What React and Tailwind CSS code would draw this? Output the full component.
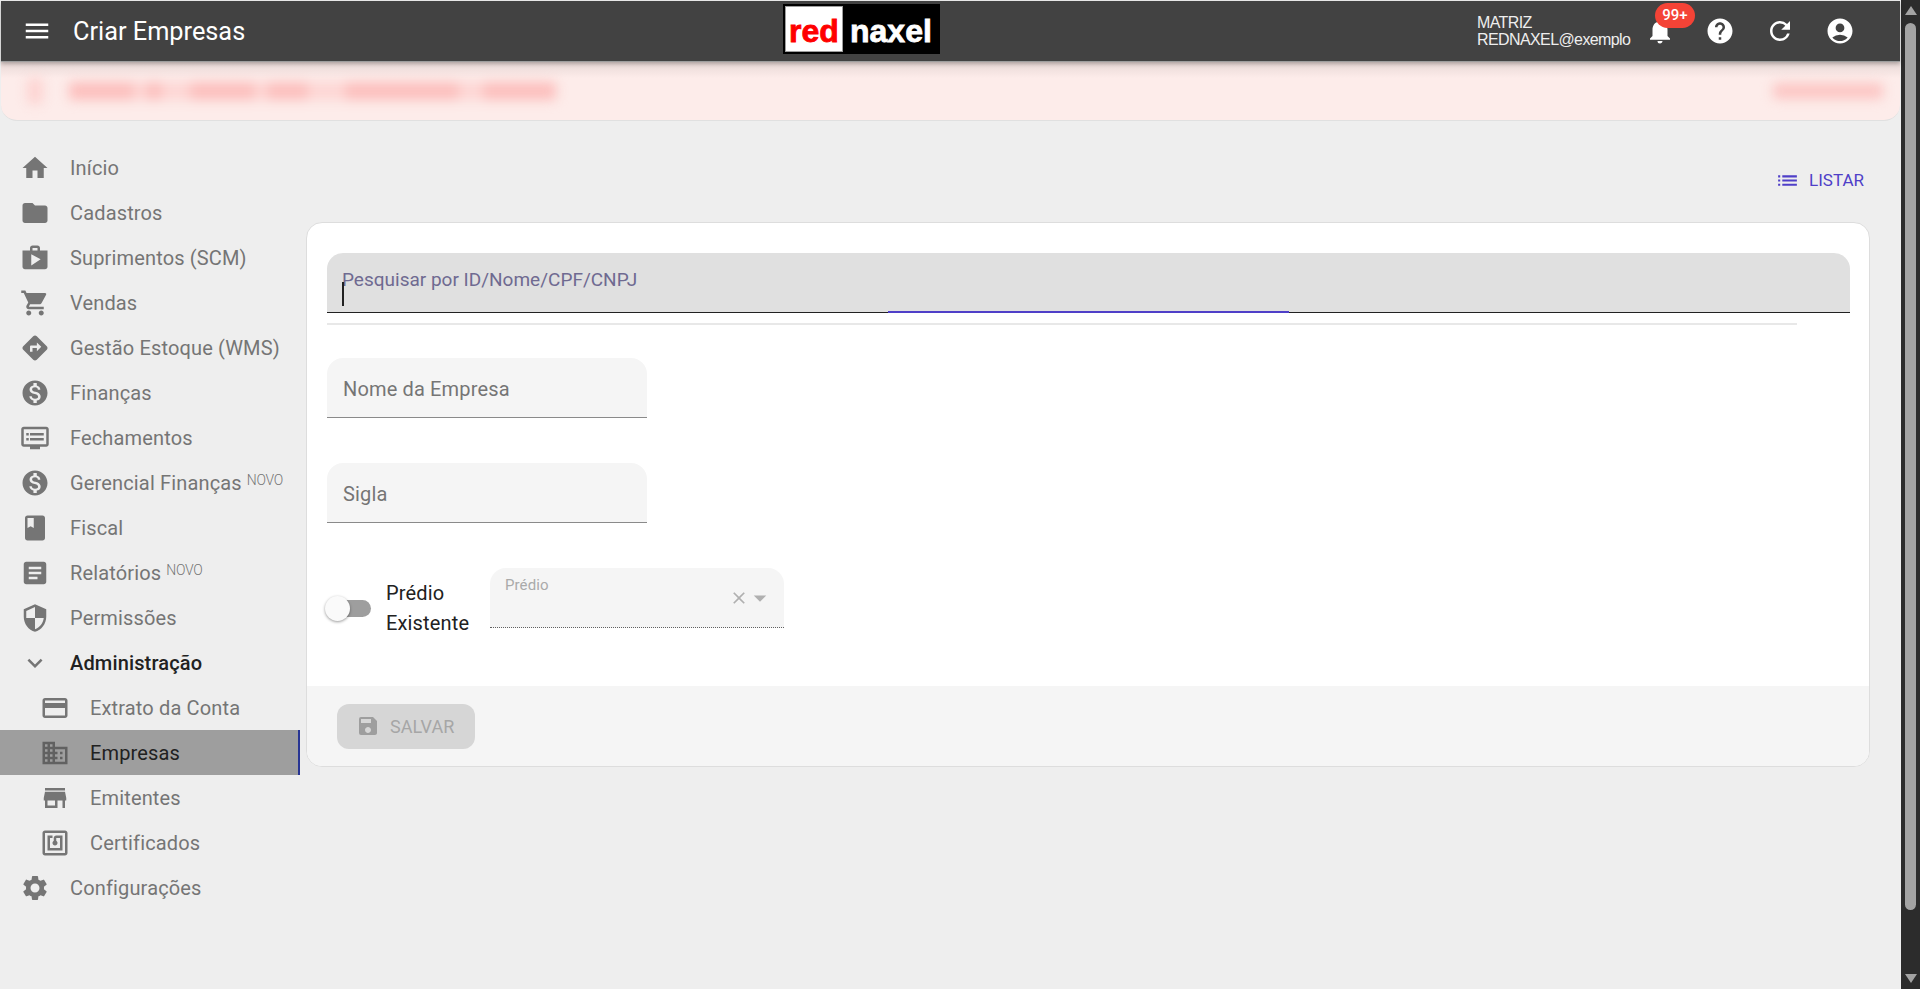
import React from "react";
import {
  MdMenu, MdNotifications, MdHelp, MdRefresh, MdAccountCircle, MdHome, MdFolder, MdShop, MdShoppingCart,
  MdDirections, MdMonetizationOn, MdDvr, MdBook, MdArticle, MdSecurity, MdExpandMore,
  MdOutlineCreditCard, MdDomain, MdStore, MdNfc, MdSettings, MdList, MdSave, MdClose, MdArrowDropDown,
} from "react-icons/md";

const items = [
  { t: "Início", I: MdHome },
  { t: "Cadastros", I: MdFolder },
  { t: "Suprimentos (SCM)", I: MdShop },
  { t: "Vendas", I: MdShoppingCart },
  { t: "Gestão Estoque (WMS)", I: MdDirections },
  { t: "Finanças", I: MdMonetizationOn },
  { t: "Fechamentos", I: MdDvr },
  { t: "Gerencial Finanças", I: MdMonetizationOn, novo: true },
  { t: "Fiscal", I: MdBook },
  { t: "Relatórios", I: MdArticle, novo: true },
  { t: "Permissões", I: MdSecurity },
  { t: "Administração", I: MdExpandMore, open: true },
  { t: "Extrato da Conta", I: MdOutlineCreditCard, sub: true },
  { t: "Empresas", I: MdDomain, sub: true, active: true },
  { t: "Emitentes", I: MdStore, sub: true },
  { t: "Certificados", I: MdNfc, sub: true },
  { t: "Configurações", I: MdSettings },
];

const blurSegments = [
  "ml-0 w-[65px]",
  "ml-[12px] w-[16px]",
  "ml-[28px] w-[65px]",
  "ml-[12px] w-[41px]",
  "ml-[37px] w-[114px]",
  "ml-[24px] w-[73px]",
];

function NavItem({ t, I, novo, open, sub, active }) {
  const tone = active ? "border-r-2 border-[#283593] bg-[#9e9e9e] text-[#212121] " : open ? "font-medium text-[#212121] " : "text-[#757575] ";
  return (
    <div className={"flex h-[45px] items-center text-[20px] leading-none tracking-[0.15px] " + (sub ? "pl-[40px] " : "pl-[20px] ") + tone}>
      <I className={"h-[30px] w-[30px] shrink-0 " + (active ? "text-[#616161]" : "text-[#757575]")} />
      <span className="ml-[20px] whitespace-nowrap">{t}</span>
      {novo && <sup className="top-0 ml-[5px] mt-[-5px] self-center text-[14px] font-light leading-none tracking-[-0.3px]">NOVO</sup>}
    </div>
  );
}

function Field({ label }) {
  return (
    <div className="flex h-[60px] w-[320px] items-center rounded-t-[16px] border-b border-[#8a8a8a] bg-[#f5f5f5] px-[16px] pt-[2px] text-[20px] tracking-[0.15px] text-[#757575]">
      {label}
    </div>
  );
}

export default function App() {
  return (
    <div className="flex h-[989px] w-[1920px] overflow-hidden bg-[#eeeeee] font-['Roboto',sans-serif]">
      <div className="flex w-[1901px] shrink-0 flex-col">
        <header className="z-10 mx-[1px] mt-[1px] flex h-[61px] shrink-0 items-center border-b border-[#9e9e9e] bg-[#424242] text-white shadow-[0_2px_4px_rgba(0,0,0,0.25)]">
          <MdMenu className="ml-[21px] h-[30px] w-[30px]" />
          <span className="ml-[21px] w-[710px] pt-[2px] text-[25.3px] leading-none">Criar Empresas</span>
          <div className="mt-[-4px] flex h-[50px] w-[157px] items-center border-[2px] border-black bg-black font-['Liberation_Sans',sans-serif] text-[32px] font-bold leading-none [-webkit-text-stroke:0.8px]">
            <span className="flex h-[46px] w-[58px] items-center justify-center border border-[#9e9e9e] bg-white pt-[4px] text-[#ff0000]">red</span>
            <span className="ml-[7px] pt-[4px] text-white">naxel</span>
          </div>
          <div className="ml-[537px] flex w-[160px] flex-col font-['Liberation_Sans',sans-serif] text-[16px] leading-[17px] tracking-[-0.6px] text-[#eeeeee]">
            <span>MATRIZ</span>
            <span className="whitespace-nowrap">REDNAXEL@exemplo</span>
          </div>
          <div className="relative ml-[8px] h-[30px] w-[30px]">
            <MdNotifications className="h-[30px] w-[30px]" />
            <span className="absolute left-[10px] top-[-13px] flex h-[25px] w-[40px] items-center justify-center rounded-full bg-[#f44336] text-[15px] font-medium text-white">99+</span>
          </div>
          <MdHelp className="ml-[30px] h-[30px] w-[30px]" />
          <MdRefresh className="ml-[30px] h-[30px] w-[30px]" />
          <MdAccountCircle className="ml-[30px] h-[30px] w-[30px]" />
        </header>

        <div className="relative mx-[1px] flex h-[59px] shrink-0 items-center justify-between overflow-hidden rounded-b-[16px] border-b border-[#e0e0e0] bg-[#fdecea]">
          <div className="absolute inset-x-0 top-0 h-[16px] bg-gradient-to-b from-[#e8d8d6] to-[#fdecea]" />
          <div className="relative ml-[26px] flex items-center">
            <span className="h-[26px] w-[16px] rounded-sm bg-[#fdd4d2] blur-[6px]" />
            <div className="ml-[26px] flex items-center bg-[#fdd6d4] blur-[6px]">
              {blurSegments.map((c) => (
                <span key={c} className={"h-[18px] rounded-sm bg-[#fcbfbd] " + c} />
              ))}
            </div>
          </div>
          <span className="relative mr-[17px] h-[16px] w-[110px] rounded-sm bg-[#fcc6c4] blur-[6px]" />
        </div>

        <div className="flex flex-1">
          <nav className="mt-[24px] w-[300px] shrink-0">
            {items.map((it) => (
              <NavItem key={it.t} {...it} />
            ))}
          </nav>
          <main className="ml-[6px] w-[1564px]">
            <div className="mt-[39px] flex h-[40px] items-center justify-end pr-[6px] pt-[1px] text-[17px] text-[#4f3fc8]">
              <MdList className="h-[25px] w-[25px]" />
              <span className="ml-[9px]">LISTAR</span>
            </div>
            <section className="mt-[22px] overflow-hidden rounded-[16px] border border-[#dddddd] bg-white">
              <div className="px-[20px] pt-[30px]">
                <div className="relative h-[60px] w-[1523px] rounded-t-[16px] border-b border-[#212121] bg-[#e0e0e0]">
                  <span className="absolute left-[15px] top-[15px] text-[19px] leading-[24px] text-[#6f6a91]">Pesquisar por ID/Nome/CPF/CNPJ</span>
                  <span className="absolute left-[15px] top-[29px] h-[24px] w-[2px] bg-[#212121]" />
                  <span className="absolute bottom-[-1px] left-[561px] h-[2px] w-[401px] bg-[#4f3fc8]" />
                </div>
                <div className="mt-[10px] h-[2px] w-[1470px] bg-[#e8e8e8]" />
                <div className="mt-[33px] flex flex-col gap-[45px]">
                  <Field label="Nome da Empresa" />
                  <Field label="Sigla" />
                </div>
                <div className="mt-[45px] flex h-[60px] items-start">
                  <div className="mt-[10px] flex h-[60px] items-center">
                    <div className="relative h-[17px] w-[44px]">
                      <div className="absolute right-0 top-0 h-[17px] w-[36px] rounded-full bg-[#9e9e9e]" />
                      <div className="absolute left-[-2px] top-[-4px] h-[25px] w-[25px] rounded-full bg-[#fafafa] shadow-[0_1px_3px_rgba(0,0,0,0.4)]" />
                    </div>
                    <div className="ml-[15px] w-[104px] text-[20px] leading-[30px] tracking-[0.15px] text-[#212121]">Prédio<br />Existente</div>
                  </div>
                  <div className="relative h-[60px] w-[294px] rounded-t-[16px] border-b border-dotted border-[#616161] bg-[#f5f5f5]">
                    <span className="absolute left-[15px] top-[7px] text-[15px] leading-[20px] tracking-[0.1px] text-[#aaaaaa]">Prédio</span>
                    <MdClose className="absolute right-[35px] top-[20px] h-[20px] w-[20px] text-[#b0b0b0]" />
                    <MdArrowDropDown className="absolute right-[9px] top-[15px] h-[30px] w-[30px] text-[#b0b0b0]" />
                  </div>
                </div>
              </div>
              <div className="mt-[58px] flex h-[80px] items-center bg-[#f5f5f5] pl-[30px]">
                <div className="flex h-[45px] w-[138px] items-center rounded-[12px] bg-[#d6d6d6] pl-[19px] text-[18px] text-[#a6a6a6]">
                  <MdSave className="h-[24px] w-[24px] text-[#9e9e9e]" />
                  <span className="ml-[10px]">SALVAR</span>
                </div>
              </div>
            </section>
          </main>
        </div>
      </div>
      <div className="flex w-[19px] shrink-0 flex-col items-center bg-[#2c2c2c]">
        <div className="mt-[6px] h-0 w-0 border-x-[6.5px] border-b-[9px] border-x-transparent border-b-[#a3a3a3]" />
        <div className="mt-[8px] h-[887px] w-[11px] rounded-full bg-[#a3a3a3]" />
        <div className="mt-[64px] h-0 w-0 border-x-[6.5px] border-t-[9px] border-x-transparent border-t-[#a3a3a3]" />
      </div>
    </div>
  );
}
